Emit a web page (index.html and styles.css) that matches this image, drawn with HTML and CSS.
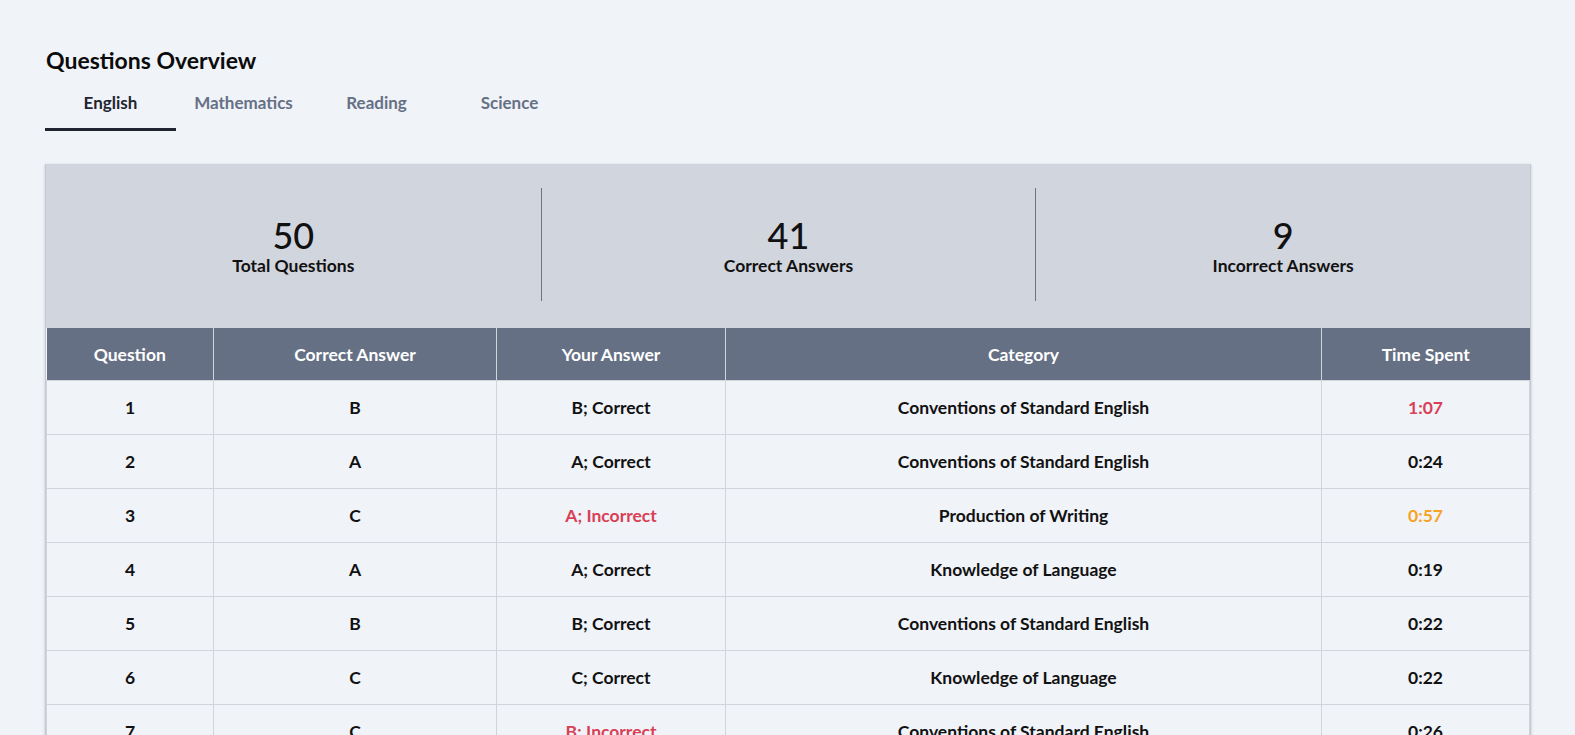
FILE: index.html
```html
<!DOCTYPE html>
<html lang="en">
<head>
    <meta charset="UTF-8">
    <meta name="viewport" content="width=device-width, initial-scale=1.0">
    <title>Questions Overview</title>
    <link rel="stylesheet" href="styles.css">
</head>
<body>
    <div class="container">
        <h1>Questions Overview</h1>

        <div class="tabs">
            <div class="tab active">English</div>
            <div class="tab">Mathematics</div>
            <div class="tab">Reading</div>
            <div class="tab">Science</div>
        </div>

        <div class="card">
            <div class="stats">
                <div class="stat">
                    <div class="stat-value">50</div>
                    <div class="stat-label">Total Questions</div>
                </div>
                <div class="stat">
                    <div class="stat-value">41</div>
                    <div class="stat-label">Correct Answers</div>
                </div>
                <div class="stat">
                    <div class="stat-value">9</div>
                    <div class="stat-label">Incorrect Answers</div>
                </div>
            </div>

            <table class="results">
                <colgroup>
                    <col class="col-question">
                    <col class="col-correct">
                    <col class="col-yours">
                    <col class="col-category">
                    <col class="col-time">
                </colgroup>
                <thead>
                    <tr>
                        <th>Question</th>
                        <th>Correct Answer</th>
                        <th>Your Answer</th>
                        <th>Category</th>
                        <th>Time Spent</th>
                    </tr>
                </thead>
                <tbody>
                    <tr>
                        <td>1</td>
                        <td>B</td>
                        <td>B; Correct</td>
                        <td>Conventions of Standard English</td>
                        <td class="slow">1:07</td>
                    </tr>
                    <tr>
                        <td>2</td>
                        <td>A</td>
                        <td>A; Correct</td>
                        <td>Conventions of Standard English</td>
                        <td>0:24</td>
                    </tr>
                    <tr>
                        <td>3</td>
                        <td>C</td>
                        <td class="wrong">A; Incorrect</td>
                        <td>Production of Writing</td>
                        <td class="warn">0:57</td>
                    </tr>
                    <tr>
                        <td>4</td>
                        <td>A</td>
                        <td>A; Correct</td>
                        <td>Knowledge of Language</td>
                        <td>0:19</td>
                    </tr>
                    <tr>
                        <td>5</td>
                        <td>B</td>
                        <td>B; Correct</td>
                        <td>Conventions of Standard English</td>
                        <td>0:22</td>
                    </tr>
                    <tr>
                        <td>6</td>
                        <td>C</td>
                        <td>C; Correct</td>
                        <td>Knowledge of Language</td>
                        <td>0:22</td>
                    </tr>
                    <tr>
                        <td>7</td>
                        <td>C</td>
                        <td class="wrong">B; Incorrect</td>
                        <td>Conventions of Standard English</td>
                        <td>0:26</td>
                    </tr>
                </tbody>
            </table>
        </div>
    </div>
</body>
</html>
```

FILE: styles.css
```css
body {
    font-family: Lato, "Liberation Sans", sans-serif;
    margin: 0;
    padding: 0;
    background-color: #f0f3f8;
    color: #111;
}
.container {
    padding: 47px 44px 0 45px;
}
h1 {
    font-size: 23px;
    line-height: 26px;
    font-weight: 700;
    margin: 0 0 10px 1px;
    color: #0b0b0b;
}
.tabs {
    display: flex;
    gap: 2px;
    margin-bottom: 33px;
}
.tab {
    width: 131px;
    padding: 10px 0 15px;
    font-size: 17px;
    line-height: 20px;
    font-weight: 700;
    text-align: center;
    color: #667085;
    border-bottom: 3px solid transparent;
}
.tab.active {
    color: #1f2430;
    border-bottom-color: #1f2430;
}
.card {
    background-color: #d1d5de;
    box-shadow: 0 1px 3px rgba(0, 0, 0, 0.18);
    border-left: 1px solid #c4c8d0;
    border-right: 1px solid #c4c8d0;
}
.stats {
    display: grid;
    grid-template-columns: 1fr 1fr 1fr;
    padding: 24px 0 27px;
}
.stat {
    height: 113px;
    display: flex;
    flex-direction: column;
    justify-content: center;
    align-items: center;
}
.stat + .stat {
    border-left: 1px solid #6b7489;
}
.stat-value {
    font-size: 36px;
    line-height: 42px;
    font-weight: 500;
}
.stat-label {
    font-size: 17.5px;
    line-height: 20px;
    font-weight: 700;
}
.results {
    width: 100%;
    border-collapse: collapse;
    table-layout: fixed;
    background-color: #f0f3f8;
    font-size: 17.5px;
}
.col-question { width: 167px; }
.col-correct { width: 283px; }
.col-yours { width: 229px; }
.col-category { width: 596px; }
.col-time { width: auto; }
.results th {
    background-color: #667085;
    color: #fff;
    font-weight: 700;
    height: 52px;
    padding: 0 10px;
    border-left: 1px solid #d1d5db;
    border-bottom: 1px solid #d1d5db;
}
.results th:first-child {
    border-left: none;
}
.results td {
    height: 53px;
    padding: 0 10px;
    text-align: center;
    font-weight: 700;
    border: 1px solid #d1d5db;
}
.results td.wrong,
.results td.slow {
    color: #d93f56;
}
.results td.warn {
    color: #f7a325;
}
```
